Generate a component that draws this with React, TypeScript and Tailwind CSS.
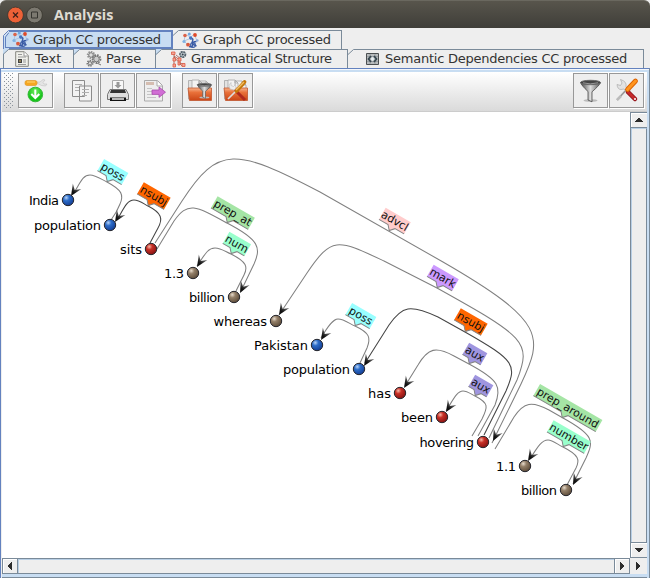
import React from "react";

const FONT = "font-['DejaVu_Sans',sans-serif]";

const MolIcon = () => (
  <svg width="17" height="17" viewBox="0 0 17 17" className="shrink-0">
    <g fill="none" stroke="#a9bfdc" strokeWidth=".9"><path d="M3 4 2 9l4 4M5 3l3 2M12 2 9 5M2 9l5-2M13 4l2 5" /></g>
    <g stroke="#3a5ca6" strokeWidth="1.5" fill="none"><path d="M8 6.5q4-.5 2.5 2.5t4 5M7 14.5q4 1 3.5-2t4-3" /><circle cx="11" cy="13" r="2.4" strokeWidth="1.1" /></g>
    <circle cx="3" cy="3.5" r="1.8" fill="#dc6248" /><circle cx="13" cy="3" r="1.9" fill="#e04a28" />
    <circle cx="7.3" cy="2" r="1.5" fill="#6ea8e2" /><circle cx="2" cy="9.5" r="1.6" fill="#7fb3e4" />
    <circle cx="6" cy="12.7" r="1.9" fill="#da5a3d" /><circle cx="8.7" cy="6" r="1.7" fill="#4474c0" /><circle cx="15.3" cy="8.5" r="1.3" fill="#8aa8d8" />
  </svg>
);
const TextIcon = () => (
  <svg width="14" height="16" viewBox="0 0 14 16" className="shrink-0">
    <path d="M.7.7h8.6l4 4v10.6H.7z" fill="#f0f0eb" stroke="#85857f" />
    <path d="M9 1v4h4" fill="#fff" stroke="#999" />
    <path d="M3 3.5h4M3 6h8M8 9h3M8 11h3M3 13.5h8" stroke="#999" />
    <path d="M3 8h4v4H3z" fill="#444" /><path d="M4 10h2" stroke="#d8b96c" />
  </svg>
);
const GearIcon = () => (
  <svg width="16" height="16" viewBox="0 0 16 16" fill="none" stroke="#777" className="shrink-0">
    <circle cx="5" cy="4" r="3.3" strokeDasharray="1.5 1" strokeWidth="1.8" stroke="#999" /><circle cx="5" cy="4" r="2.3" fill="#ddd" />
    <circle cx="10.5" cy="8" r="4" strokeDasharray="1.7 1" strokeWidth="1.8" /><circle cx="10.5" cy="8" r="2.8" fill="#ccc" />
    <circle cx="4" cy="12.3" r="2.7" strokeDasharray="1.4 1" strokeWidth="1.6" /><circle cx="4" cy="12.3" r="1.7" fill="#ddd" />
    <path d="m11 12 4 2" />
  </svg>
);
const TreeIcon = () => (
  <svg width="16" height="17" viewBox="0 0 16 17" className="shrink-0">
    <path d="M3 3v11M3 5l6 4v5M3 6l8 9M5 4l5 4M9 12l5 2" stroke="#a34f43" strokeWidth=".8" fill="none" />
    <g fill="#f5a597" stroke="#dc5a44" strokeWidth=".8"><path d="M.5 1h3.5v2.5H.5zM2 7h2.5v3H2zM7 7h3v3H7zM2 13h2.5v3H2zM7 11h2v3H7zM11 12.5h3v3h-3z" /></g>
    <circle cx="11.7" cy="3.5" r="2.7" stroke="#55636d" strokeWidth="1.8" strokeDasharray="2 .6" fill="#cbd4d9" />
    <circle cx="11.7" cy="3.5" r="1" fill="#34414c" />
  </svg>
);
const SemIcon = () => (
  <svg width="13" height="12" viewBox="0 0 13 12" className="shrink-0">
    <path d="M.5.5h12v11H.5z" fill="#b7bbbd" stroke="#4b4f51" />
    <path d="M1 3.5h11M1 8.5h11M4 1v10M9 1v10" stroke="#90979a" strokeWidth=".8" />
    <path d="M5 3 2.5 6 5 9M8 3l2.5 3L8 9" stroke="#34444d" strokeWidth="1.7" fill="none" />
    <path d="m6.5 4 2 2-2 2-2-2z" fill="#e6eef2" />
  </svg>
);

const Funnel = ({ t }: { t?: string }) => (
  <g transform={t}>
    <ellipse cx="17.5" cy="27.5" rx="7" ry="1.3" fill="#bbb" />
    <path d="M7.5 9.5q1 3 7.5 9v8.5l4 1.8v-10q7-6 8.5-9z" fill="url(#metal)" stroke="#4a4a4a" strokeWidth=".8" />
    <ellipse cx="17.5" cy="9.5" rx="10" ry="2.2" fill="#444" stroke="#666" />
    <path d="M10 9.8q7 2.2 15 0" stroke="#999" fill="none" />
  </g>
);
const FolderBack = () => (
  <g fill="#f3f3f3" stroke="#a5a5a5" strokeWidth=".8">
    <path d="M6.5 26V7.500h7v18z" fill="#e3e3e3" />
    <path d="M10 7h7l3 3v12H10zM17 8h7l4 4v10H17z" />
    <path d="M17 7v3h3M24 8v4h4" fill="none" />
  </g>
);
const Folder = () => (
  <g>
    <FolderBack />
    <path d="M6 15h23.500v12.500H7.500z" fill="url(#folder)" stroke="#c0562f" strokeWidth=".8" />
  </g>
);

const Btn = ({ children }: { children: React.ReactNode }) => (
  <div className="h-[35px] w-[35px] bg-[#eee] shadow-[1px_1px_0_#fff] ring-1 ring-inset ring-[#989898]">
    <svg width="35" height="35" viewBox="0 0 35 35">{children}</svg>
  </div>
);

type TabProps = { label: string; icon: React.ReactNode; cls: string; pad: string; track?: string; blue?: boolean; first?: boolean };
const Tab = ({ label, icon, cls, pad, track = "", blue, first }: TabProps) => (
  <div className={`flex h-full shrink-0 border-r border-[#7a8a99] ${cls}`}>
    <svg width="6" height="20" className="shrink-0">
      {blue && <path d="M0 0h6L0 6z" fill="#c8ddf2" />}
      <path d="M0 5.5 5.5.5H6" fill="none" stroke="#7a8a99" />
      {first && <path d="M.5 5v15" stroke="#7a8a99" />}
    </svg>
    <div className={`flex min-w-0 flex-1 items-center border-t border-[#7a8a99] ${pad}`}>
      {icon}
      <span className={`whitespace-nowrap text-[13px] leading-4 text-[#333] ${track}`}>{label}</span>
    </div>
  </div>
);

const nodes: [string, number, number, string, number][] = [
  ["India", 68, 200, "b", 30], ["population", 110, 225, "b", 67], ["sits", 151, 249, "r", 22], ["1.3", 193, 273, "g", 20],
  ["billion", 234, 297, "g", 36], ["whereas", 276, 321, "g", 53.500], ["Pakistan", 317, 345, "b", 54], ["population", 359, 369, "b", 67],
  ["has", 400, 393, "r", 23], ["been", 442, 417, "r", 32], ["hovering", 483, 442, "r", 54.500], ["1.1", 525, 466, "g", 20], ["billion", 566, 490, "g", 36],
];
const edges: [string, string][] = [
  ["M73 194C80 184 82 175 90 175C95 175 101 179 107 182C122 190 124 195 120 204Q117 212 111 220", "#808080"],
  ["M117 220C124 208 127 200 134 200C139 200 144 204 148 206C162 213 163 219 158 228L150 243", "#444"],
  ["M197 266C205 254 208 248 215 248C221 248 226 252 231 254C247 262 248 267 244 275L236 291", "#808080"],
  ["M157 249L174 221C188 201 196 206 227 223C260 240 261 248 254 264L241 291", "#808080"],
  ["M155 243L182 201C218 145 236 148 320 192L443 262C547 322 543 337 521 384L492 443", "#808080"],
  ["M279 315L307 273C332 236 337 239 384 261L437 288C525 337 532 342 517 380L489 438", "#808080"],
  ["M321 338C328 326 333 319 338 319C344 319 350 324 355 326C370 333 371 338 367 348L360 363", "#808080"],
  ["M365 363L389 325C402 306 410 304 438 317L465 332C516 361 517 365 506 391L484 435", "#444"],
  ["M405 386L418 365C428 348 436 346 454 356L469 364C499 380 502 387 495 405L478 436", "#808080"],
  ["M446 411C453 400 457 391 463 391C467 391 471 394 475 396C489 403 488 407 482 419L472 436", "#808080"],
  ["M495 449L514 417C524 402 532 401 549 410L563 418C594 435 594 441 586 458L573 484", "#808080"],
  ["M530 459C538 446 542 440 548 440C553 440 558 445 563 447C579 455 580 460 576 468L567 485", "#808080"],
];
const arrows: [number, number, number][] = [
  [71, 196, 122], [115, 222, 122], [197, 267, 122], [240, 293, 117], [279, 315, 122], [321, 340, 122],
  [364, 366, 122], [404, 388, 122], [446, 412, 122], [493, 441, 117], [528, 461, 122], [573, 485, 117],
];
const labels: [string, number, number, number, string][] = [
  ["poss", 107, 182, 28, "#99ffff"], ["nsubj", 148, 206, 31, "#ff6600"], ["prep_at", 227, 223, 43, "#a5e5a5"],
  ["num", 231, 254, 25, "#99ffcc"], ["advcl", 389, 231, 29, "#ffcccc"], ["mark", 437, 288, 29, "#cc99ff"],
  ["poss", 355, 326, 28, "#99ffff"], ["nsubj", 465, 332, 31, "#ff6600"], ["aux", 469, 364, 21, "#9f95df"],
  ["aux", 475, 396, 21, "#9f95df"], ["prep_around", 562, 418, 72, "#a5e5a5"], ["number", 563, 447, 43, "#99ffcc"],
];

const Graph = () => (
  <svg width="628" height="446" viewBox="2 112 628 446" className="block bg-white">
    <defs>
      <radialGradient id="b" cx=".35" cy=".3" r=".75"><stop offset="0" stopColor="#b8d4f8" /><stop offset=".35" stopColor="#2d6dc8" /><stop offset="1" stopColor="#123b91" /></radialGradient>
      <radialGradient id="r" cx=".35" cy=".3" r=".75"><stop offset="0" stopColor="#f8b8a8" /><stop offset=".35" stopColor="#c73026" /><stop offset="1" stopColor="#821010" /></radialGradient>
      <radialGradient id="g" cx=".35" cy=".3" r=".75"><stop offset="0" stopColor="#e8dccd" /><stop offset=".35" stopColor="#948069" /><stop offset="1" stopColor="#5a4937" /></radialGradient>
      <linearGradient id="head"><stop offset="0" stopColor="#777" /><stop offset=".6" stopColor="#111" /></linearGradient>
    </defs>
    {edges.map(([d, c], i) => <path key={i} d={d} fill="none" stroke={c} strokeWidth="1.05" />)}
    {labels.map(([s, x, y, w, c], i) => (
      <g key={i} transform={`translate(${x} ${y}) rotate(30)`}>
        <path d={`M${-w / 2} -18.500H${w / 2}V-5H4L0 -.5 -4 -5H${-w / 2}z`} fill={c} />
        <path d={`M${-w / 2} -5H-4L0 -.5 4 -5H${w / 2}`} fill="none" stroke="#858585" />
        <text y="-8" textAnchor="middle" fontSize="11" fill="#111">{s}</text>
      </g>
    ))}
    {arrows.map(([x, y, a], i) => <path key={i} transform={`translate(${x} ${y}) rotate(${a})`} d="M0 0-11.500-5-7 0-11.500 5z" fill="url(#head)" />)}
    {nodes.map(([s, x, y, c, w], i) => (
      <g key={i}>
        <circle cx={x} cy={y} r="5.700" fill={`url(#${c})`} stroke="#25252b" />
        <text x={x - 9 - w} y={y + 5} textLength={w} fontSize="13" fill="#000">{s}</text>
      </g>
    ))}
  </svg>
);

const Arrow = ({ d }: { d: string }) => <svg width="10" height="10" viewBox="0 0 10 10" shapeRendering="crispEdges"><path d={d} fill="#2c2c2c" /></svg>;

export default function App() {
  return (
    <div className={`flex h-[578px] w-[650px] flex-col overflow-hidden bg-[#eee] ${FONT}`}>
      <header className="flex h-7 shrink-0 items-center rounded-t-[6px] border-t border-[#6a685f] bg-linear-to-b from-[#58554c] to-[#3f3e39] pl-[7px]">
        <svg width="36" height="18" viewBox="0 0 36 18">
          <circle cx="8.5" cy="9" r="7.900" fill="#ed6137" stroke="#38362f" strokeWidth=".8" />
          <path d="m6 6.5 5 5m0-5-5 5" stroke="#3c2019" strokeWidth="1.2" />
          <circle cx="27.5" cy="9" r="7.900" fill="#7c7970" stroke="#38362f" strokeWidth=".8" />
          <path d="M24.500 6h6v6h-6z" fill="none" stroke="#35342f" />
        </svg>
        <h1 className="ml-[11px] font-['Open_Sans',sans-serif] text-[14.4px] font-bold leading-5 text-[#dfdbd2]">Analysis</h1>
      </header>

      <nav className="flex h-10 shrink-0 flex-col pl-[3px] pt-[2px]">
        <div className="flex h-[19px]">
          <div className="flex h-[19px] w-[170px] shrink-0">
            <svg width="6" height="19" className="shrink-0">
              <path d="M1 19V6l5-5v18z" fill="#c8ddf2" />
              <path d="M.5 19V5.5L5.5.5H6M2.5 17V7L6 2.5" fill="none" stroke="#6382bf" />
              <path d="M2 17.5h4" stroke="#6382bf" />
            </svg>
            <div className="flex flex-1 items-center border-b-2 border-r-2 border-t-2 border-[#6382bf] bg-[#c8ddf2] pl-[3px]">
              <MolIcon />
              <span className="ml-1 whitespace-nowrap text-[13px] leading-4 tracking-[-0.27px] text-[#333]">Graph CC processed</span>
            </div>
          </div>
          <Tab label="Graph CC processed" track="tracking-[-0.27px]" cls="w-[169px]" pad="gap-1 pl-[3px]" icon={<MolIcon />} />
        </div>
        <div className="flex h-[19px]">
          <Tab first blue label="Text" cls="w-[71px]" pad="gap-1.5 pl-1.5" icon={<TextIcon />} />
          <Tab blue label="Parse" cls="w-[82px]" pad="gap-1 pl-1.5" icon={<GearIcon />} />
          <Tab blue label="Grammatical Structure" track="tracking-[-0.38px]" cls="w-[192px]" pad="gap-1 pl-[9px]" icon={<TreeIcon />} />
          <Tab label="Semantic Dependencies CC processed" track="tracking-[-0.24px]" cls="w-[296px]" pad="gap-1.5 pl-3" icon={<SemIcon />} />
        </div>
      </nav>

      <main className="flex h-[510px] flex-col border-l border-r border-t border-[#6382bf] border-r-[#7a8a99]">
        <div className="h-px shrink-0 bg-[#f4f7fb]" />
        <div className="h-0.5 shrink-0 bg-[#c8ddf2]" />
        <div className="flex min-h-0 flex-1 border-r-2 border-[#c8ddf2] pl-px">
          <div className="flex w-[645px] flex-col">
            <div className="flex h-10 shrink-0 border-b border-[#ccc] bg-linear-to-b from-white to-[#dadada] pt-px">
              <svg width="10" height="36" className="ml-[2px] shrink-0" shapeRendering="crispEdges">
                <defs>
                  <pattern id="grip" width="4" height="4" patternUnits="userSpaceOnUse"><path d="M0 0h1v1H0zM2 2h1v1H2z" fill="#8a929b" /></pattern>
                </defs>
                <rect width="10" height="36" fill="url(#grip)" />
              </svg>
              <div className="ml-1 flex">
                <Btn>
                  <defs>
                    <linearGradient id="folder" x2="0" y2="1"><stop stopColor="#f6b48d" /><stop offset=".35" stopColor="#e9713a" /><stop offset="1" stopColor="#ca4516" /></linearGradient>
                    <linearGradient id="metal"><stop stopColor="#444" /><stop offset=".5" stopColor="#ddd" /><stop offset="1" stopColor="#555" /></linearGradient>
                    <radialGradient id="green" cy=".3"><stop stopColor="#74ec61" /><stop offset="1" stopColor="#18c51c" /></radialGradient>
                  </defs>
                  <path d="M19 9h3l3-2.500 2 .5-2 2.500 1 1.500h3l-1.500 2-4-.5-4-2z" fill="#e4e4e4" stroke="#bbb" strokeWidth=".5" />
                  <rect x="7" y="7.5" width="12" height="5" rx="2" fill="#f6a720" stroke="#df9a28" strokeWidth=".7" /><path d="M9 9h8" stroke="#ffd673" />
                  <circle cx="17.3" cy="21.5" r="7.3" fill="url(#green)" stroke="#35b938" />
                  <path d="M17.3 16.500v8m-4-3.500 4 4 4-4" fill="none" stroke="#fff" strokeWidth="2" />
                </Btn>
              </div>
              <div className="ml-[11px] flex gap-px">
                <Btn>
                  <path d="M8.5 7.5h12v16h-12zM15.5 13h12v15h-12z" fill="#f3f3f3" stroke="#8c8c8c" />
                  <path d="M11 11.500h7M11 14.500h4M11 17.500h4M18 16.5h7M18 19.500h7M18 22.5h5" stroke="#b0b0b0" />
                </Btn>
                <Btn>
                  <path d="M12.5 7.5h11v11h-11z" fill="#f8f8f8" stroke="#aaa" />
                  <path d="M16.5 9h3v3h2L18 15.5 14.5 12h2z" fill="#999" />
                  <path d="M10 16.5h16l2.5 5v5h-21v-5z" fill="#ddd" stroke="#777" />
                  <path d="M11 17h14l1 3H10z" fill="#333" /><path d="M10 24.500h16v3.500H10z" fill="#111" /><path d="M12 26h12" stroke="#eee" strokeWidth="1.500" />
                </Btn>
                <Btn>
                  <path d="M8.5 7.5h13l5 5V28h-18z" fill="#eee" stroke="#aaa" /><path d="M21 8v5h5" fill="#fff" stroke="#aaa" />
                  <path d="M10 9h8v3h-8z" fill="#d5bdb0" /><path d="M11 15.500h5M11 18.5h5M11 21.500h5M11 24.5h9" stroke="#c4c4c4" />
                  <path d="M16 17h7v-3l6.5 5.200-6.500 5.200v-3h-7z" fill="#d16ed5" stroke="#a64da9" strokeWidth=".8" />
                </Btn>
              </div>
              <div className="ml-[11px] flex gap-px">
                <Btn><Folder /><Funnel t="translate(10 5) scale(.71)" /></Btn>
                <Btn>
                  <Folder />
                  <path d="m17 17 10 10" stroke="#b02a1d" strokeWidth="3" />
                  <path d="m10 26 8-8" stroke="#ddd" strokeWidth="1.700" />
                  <path d="M13 9.500v3l2.500 1 2-2 .5 3.500-2 2-4-1-1-4z" fill="#eee" stroke="#bbb" strokeWidth=".6" />
                  <path d="m18.500 18 8-9" stroke="#c57709" strokeWidth="3.800" strokeLinecap="round" /><path d="m18 17 8-8" stroke="#efbd63" strokeWidth="1.5" />
                </Btn>
              </div>
              <div className="ml-auto mr-[3px] flex gap-px">
                <Btn><Funnel /></Btn>
                <Btn>
                  <path d="m8 27 11-12" stroke="#999" strokeWidth="1.800" /><path d="m8 27 4-4" stroke="#bbb" strokeWidth="2.5" />
                  <path d="M11.500 6.500 13 10l-1.500 2.500L8 11.500q.5 5 4 5l3-.5 4 4 2-2.500-4-4q1-5-5.500-7z" fill="#e2e2e2" stroke="#aaa" strokeWidth=".7" />
                  <path d="m19 19 7 7" stroke="#8d1117" strokeWidth="4.500" strokeLinecap="round" /><path d="m19 19 7 7" stroke="#c62a2c" strokeWidth="2.800" strokeLinecap="round" /><circle cx="26" cy="26" r="1" fill="#fff" />
                  <path d="m18.500 16.500 8-8.500" stroke="#db6200" strokeWidth="4.800" strokeLinecap="round" /><path d="m18.500 16.500 8-8.500" stroke="#ff951e" strokeWidth="3" strokeLinecap="round" />
                </Btn>
              </div>
            </div>
            <div className="flex h-[446px] shrink-0">
              <Graph />
              <div className="flex w-[17px] flex-col border-l border-t border-[#7a8a99]">
                <div className="flex h-[15px] items-center justify-center border-b border-[#7a8a99] shadow-[inset_1px_1px_0_#fff]"><Arrow d="M4 3h2v1h1v1h1v1h1v1H1V6h1V5h1V4h1z" /></div>
                <div className="flex-1 border-l border-r border-t border-[#b8cfe5] border-r-[#7a8a99]" />
                <div className="flex h-4 items-center justify-center border-b border-t border-[#7a8a99] shadow-[inset_1px_1px_0_#fff]"><Arrow d="M1 3h8v1H8v1H7v1H6v1H4V6H3V5H2V4H1z" /></div>
              </div>
            </div>
            <div className="flex h-4 shrink-0">
              <div className="flex w-[628px] border-b border-l border-t border-[#7a8a99]">
                <div className="flex w-[15px] items-center justify-center border-r border-[#7a8a99] shadow-[inset_1px_1px_0_#fff]"><Arrow d="M7 1v8H6V8H5V7H4V6H3V4h1V3h1V2h1V1z" /></div>
                <div className="flex-1 border-l border-t border-[#b8cfe5]" />
                <div className="flex w-4 items-center justify-center border-l border-r border-[#7a8a99] shadow-[inset_1px_1px_0_#fff]"><Arrow d="M3 1v8h1V8h1V7h1V6h1V4H6V3H5V2H4V1z" /></div>
              </div>
              <div className="flex w-[17px] items-center justify-center pr-0.5"><Arrow d="M3 1v8h1V8h1V7h1V6h1V4H6V3H5V2H4V1z" /></div>
            </div>
            <div className="flex-1 border-b border-[#7a8a99] bg-[#c8ddf2]" />
          </div>
        </div>
      </main>
    </div>
  );
}
